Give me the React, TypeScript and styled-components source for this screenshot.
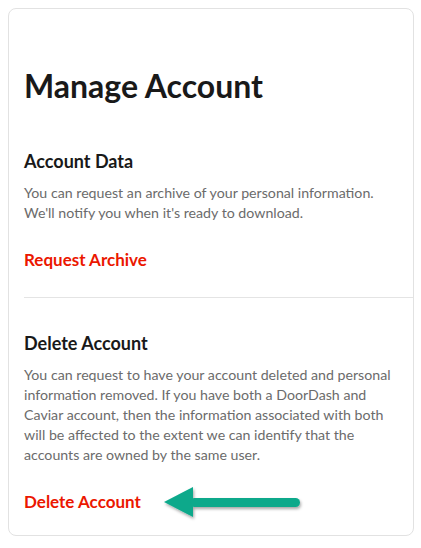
import React from "react";
import styled, { createGlobalStyle } from "styled-components";

const GlobalStyle = createGlobalStyle`
  body {
    margin: 0;
    background: #ffffff;
    font-family: 'Lato', 'Liberation Sans', sans-serif;
  }
`;

const Page = styled.div`
  padding: 8px 7px 10px 8px;
`;

const Card = styled.div`
  border: 1px solid #e2e2e2;
  border-radius: 8px;
  height: 528px;
  box-sizing: border-box;
  padding: 57px 0 0 15px;
`;

const Title = styled.h1`
  margin: 0 0 43px 0;
  font-size: 32px;
  line-height: 40px;
  font-weight: 700;
  color: #191919;
`;

const Section = styled.section<{ $divided?: boolean }>`
  padding: 0 8px 0 0;
  border-bottom: ${(p) => (p.$divided ? "1px solid #e4e4e4" : "none")};
  padding-bottom: ${(p) => (p.$divided ? "27px" : "0")};
  margin-bottom: ${(p) => (p.$divided ? "33px" : "0")};
`;

const Heading = styled.h2`
  margin: 0 0 10px 0;
  font-size: 18px;
  line-height: 24px;
  font-weight: 700;
  color: #191919;
`;

const Body = styled.p`
  margin: 0 0 27px 0;
  font-size: 14.2px;
  line-height: 20px;
  color: #6b6b6b;
`;

const LinkRow = styled.div`
  display: flex;
  align-items: center;
  gap: 23px;
  height: 20px;
`;

const RedLink = styled.a`
  font-size: 17px;
  line-height: 20px;
  font-weight: 700;
  color: #eb1700;
  text-decoration: none;
`;

const ArrowSvg = styled.svg`
  overflow: visible;
  flex: none;
`;

// the green pointer arrow, drawn on top of the row's height
const Arrow = () => (
  <ArrowSvg width="140" height="20" viewBox="0 6 140 20">
    <defs>
      <filter id="sh" x="-10%" y="-30%" width="130%" height="180%">
        <feDropShadow dx="1" dy="2" stdDeviation="1.5" floodColor="#000" floodOpacity="0.35" />
      </filter>
    </defs>
    <g filter="url(#sh)" fill="#0aa98b">
      <polygon points="0,16 29,1 29,31" />
      <rect x="26" y="12" width="110" height="9" rx="4.5" />
    </g>
  </ArrowSvg>
);

export default function App() {
  return (
    <>
      <GlobalStyle />
      <Page>
        <Card>
          <Title>Manage Account</Title>
          <Section $divided>
            <Heading>Account Data</Heading>
            <Body>
              You can request an archive of your personal information.
              <br />
              We'll notify you when it's ready to download.
            </Body>
            <RedLink href="#">Request Archive</RedLink>
          </Section>
          <Section>
            <Heading>Delete Account</Heading>
            <Body>
              You can request to have your account deleted and personal information removed. If you have
              both a DoorDash and Caviar account, then the information associated with both will be affected
              to the extent we can identify that the accounts are owned by the same user.
            </Body>
            <LinkRow>
              <RedLink href="#">Delete Account</RedLink>
              <Arrow />
            </LinkRow>
          </Section>
        </Card>
      </Page>
    </>
  );
}
